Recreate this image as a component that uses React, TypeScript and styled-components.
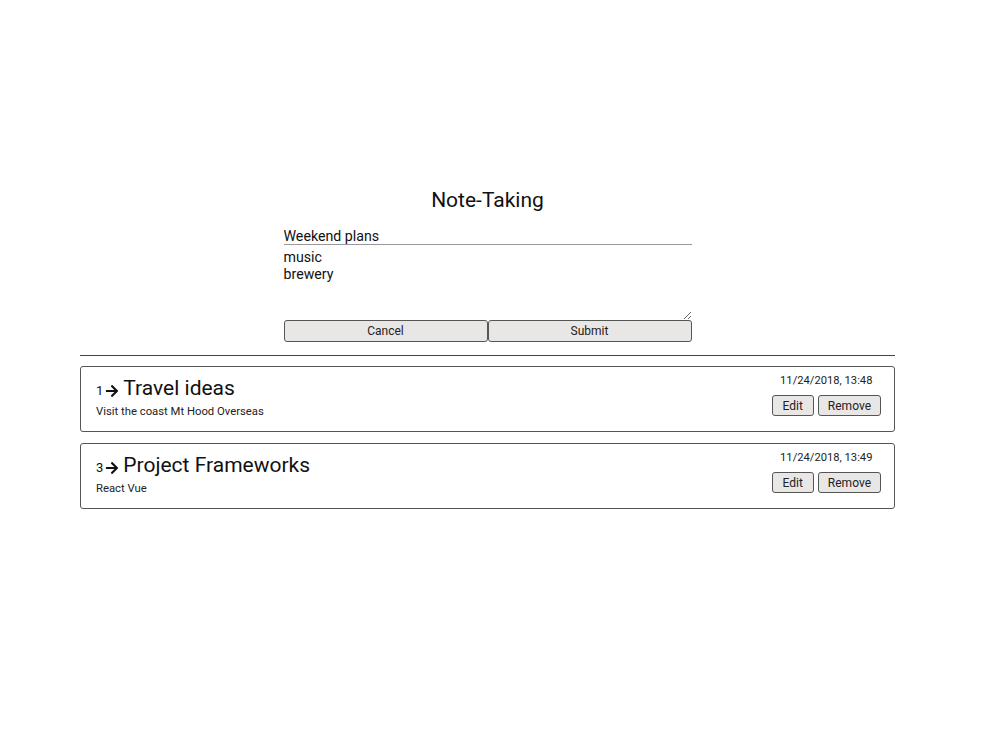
import React from "react";
import styled, { createGlobalStyle } from "styled-components";

const Global = createGlobalStyle`
  html, body { margin: 0; padding: 0; background: #fff; }
  body { font-family: Roboto, "Noto Sans", sans-serif; color: #111; }
`;

const Page = styled.div`
  width: 815px;
  margin-left: 80px;
  padding-top: 186px;
`;

const Title = styled.h1`
  margin: 0;
  text-align: center;
  font-size: 21px;
  font-weight: 400;
  line-height: 28px;
`;

const Form = styled.form`
  width: 408px;
  margin: 14px auto 0;
  display: flex;
  flex-direction: column;
`;

const TitleInput = styled.input`
  font-family: Roboto, sans-serif;
  font-size: 14.2px;
  color: #111;
  border: none;
  border-bottom: 1px solid #999;
  padding: 0;
  height: 16px;
  outline: none;
  background: transparent;
`;

const Body = styled.textarea`
  font-family: Roboto, sans-serif;
  font-size: 14.2px;
  line-height: 17px;
  color: #111;
  border: none;
  padding: 0;
  margin-top: 4px;
  height: 71px;
  outline: none;
  resize: vertical;
`;

const ButtonRow = styled.div`
  display: flex;
`;

const FormButton = styled.button`
  flex: 1;
  height: 22px;
  font-family: Roboto, sans-serif;
  font-size: 12px;
  color: #222;
  background: #e9e7e6;
  border: 1px solid #555;
  border-radius: 3px;
  padding: 0;
`;

const Divider = styled.hr`
  border: none;
  border-top: 1px solid #444;
  margin: 13px 0 10px;
`;

const List = styled.div`
  display: flex;
  flex-direction: column;
  gap: 11px;
`;

const Card = styled.div`
  height: 66px;
  box-sizing: border-box;
  border: 1px solid #555;
  border-radius: 3px;
  display: flex;
  justify-content: space-between;
  padding: 0 13px 0 15px;
`;

const Left = styled.div`
  display: flex;
  flex-direction: column;
  padding-top: 8px;
`;

const Heading = styled.div`
  display: flex;
  align-items: center;
  height: 26px;
`;

const Num = styled.span`
  font-size: 13px;
  margin-top: 5px;
`;

const Arrow = styled.svg`
  width: 14px;
  height: 14px;
  margin: 5px 4px 0 2px;
`;

const NoteTitle = styled.span`
  font-size: 21px;
`;

const Desc = styled.div`
  font-size: 11.3px;
  margin-top: 4px;
  color: #222;
`;

const Right = styled.div`
  display: flex;
  flex-direction: column;
  align-items: center;
  padding-top: 7px;
`;

const Date = styled.div`
  font-size: 11.2px;
  line-height: 14px;
  color: #222;
`;

const Actions = styled.div`
  display: flex;
  gap: 4px;
  margin-top: 7px;
`;

const SmallButton = styled.button<{ $pad: number }>`
  height: 21px;
  font-family: Roboto, sans-serif;
  font-size: 12px;
  color: #222;
  background: #e9e7e6;
  border: 1px solid #555;
  border-radius: 3px;
  padding: 0 ${(p) => p.$pad}px;
`;

const notes = [
  { id: 1, title: "Travel ideas", body: "Visit the coast Mt Hood Overseas", date: "11/24/2018, 13:48" },
  { id: 3, title: "Project Frameworks", body: "React Vue", date: "11/24/2018, 13:49" },
];

const ArrowIcon = () => (
  <Arrow viewBox="0 0 448 512">
    <path
      fill="#111"
      d="M190.5 66.9l22.2-22.2c9.4-9.4 24.6-9.4 33.9 0L441 239c9.4 9.4 9.4 24.6 0 33.9L246.6 467.3c-9.4 9.4-24.6 9.4-33.9 0l-22.2-22.2c-9.5-9.5-9.3-25 .4-34.3L311.4 296H24c-13.3 0-24-10.7-24-24v-32c0-13.3 10.7-24 24-24h287.4L190.9 101.2c-9.8-9.3-10-24.8-.4-34.3z"
    />
  </Arrow>
);

export default function App() {
  return (
    <>
      <Global />
      <Page>
        <Title>Note-Taking</Title>
        <Form onSubmit={(e) => e.preventDefault()}>
          <TitleInput defaultValue="Weekend plans" />
          <Body defaultValue={"music\nbrewery"} />
          <ButtonRow>
            <FormButton type="button">Cancel</FormButton>
            <FormButton type="submit">Submit</FormButton>
          </ButtonRow>
        </Form>
        <Divider />
        <List>
          {notes.map((n) => (
            <Card key={n.id}>
              <Left>
                <Heading>
                  <Num>{n.id}</Num>
                  <ArrowIcon />
                  <NoteTitle>{n.title}</NoteTitle>
                </Heading>
                <Desc>{n.body}</Desc>
              </Left>
              <Right>
                <Date>{n.date}</Date>
                <Actions>
                  <SmallButton $pad={10}>Edit</SmallButton>
                  <SmallButton $pad={9}>Remove</SmallButton>
                </Actions>
              </Right>
            </Card>
          ))}
        </List>
      </Page>
    </>
  );
}
